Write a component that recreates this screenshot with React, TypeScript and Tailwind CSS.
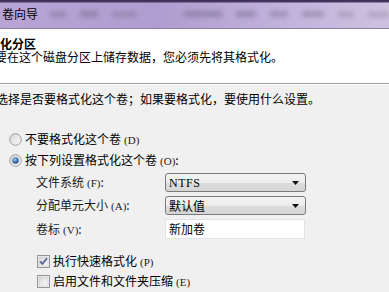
import React from 'react'

const font = { fontFamily: '"Noto Sans CJK SC", "Noto Sans", sans-serif' }

function Radio({ checked }: { checked?: boolean }) {
  return (
    <svg width="13" height="13" viewBox="0 0 13 13" className="shrink-0">
      <defs>
        <linearGradient id={checked ? 'rbg1' : 'rbg0'} x1="0" y1="0" x2="1" y2="1">
          <stop offset="0" stopColor="#d4d4d4" />
          <stop offset="1" stopColor="#fbfbfb" />
        </linearGradient>
        <radialGradient id="rdot" cx="0.4" cy="0.35" r="0.7">
          <stop offset="0" stopColor="#a9c8ea" />
          <stop offset="0.6" stopColor="#3c70ad" />
          <stop offset="1" stopColor="#1d4276" />
        </radialGradient>
      </defs>
      <circle cx="6.5" cy="6.5" r="5.8" fill={`url(#${checked ? 'rbg1' : 'rbg0'})`} stroke="#9a9c9e" strokeWidth="1" />
      {checked && <circle cx="6.5" cy="6.5" r="3.2" fill="url(#rdot)" />}
    </svg>
  )
}

function Check({ checked }: { checked?: boolean }) {
  return (
    <svg width="13" height="13" viewBox="0 0 13 13" className="shrink-0">
      <defs>
        <linearGradient id="cbg" x1="0" y1="0" x2="1" y2="1">
          <stop offset="0" stopColor="#d6d6d6" />
          <stop offset="1" stopColor="#fafafa" />
        </linearGradient>
      </defs>
      <rect x="0.5" y="0.5" width="12" height="12" fill="#f4f4f4" stroke="#959595" />
      <rect x="2" y="2" width="9" height="9" fill="url(#cbg)" stroke="#c6c6c6" strokeWidth="0.6" />
      {checked && (
        <path d="M3.2 6.4 L5.4 9 L9.9 3.2" fill="none" stroke="#52668f" strokeWidth="1.8" strokeLinejoin="round" />
      )}
    </svg>
  )
}

function Combo({ value, mono }: { value: string; mono?: boolean }) {
  return (
    <div className="w-[141px] h-[19px] flex items-center justify-between rounded-[3px] border border-[#7a7a7a] bg-[linear-gradient(180deg,#f4f4f4_0%,#ececec_50%,#dcdcdc_51%,#d6d6d6_100%)] pl-[3px] pr-[6px]">
      <span
        className={mono ? 'text-[12px] leading-none text-black tracking-[0.5px]' : 'text-[12px] leading-none text-black'}
        style={mono ? { fontFamily: '"Liberation Serif", serif' } : font}
      >
        {value}
      </span>
      <svg width="7" height="4" viewBox="0 0 7 4">
        <polygon points="0,0 7,0 3.5,4" fill="#111" />
      </svg>
    </div>
  )
}

function Key({ k }: { k: string }) {
  return (
    <span className="ml-[3px] text-[11px] text-[#222]" style={{ fontFamily: '"Liberation Serif", serif' }}>
      ({k})
    </span>
  )
}

export default function App() {
  return (
    <div className="w-[389px] h-[292px] overflow-hidden bg-[#f0f0f0] text-[12px] text-black" style={font}>
      {/* title bar */}
      <div className="h-[29px] flex items-center gap-[12px] border-b border-[#8f82a8] bg-[linear-gradient(180deg,#3a2c52_0px,#4a3a66_2px,rgba(255,255,255,0)_3px),linear-gradient(90deg,#b8a5d6_0%,#b09ccf_40%,#c2b4dc_75%,#cdc2e0_100%)] pl-[2px] overflow-hidden">
        <span className="shrink-0 whitespace-nowrap text-[12px] text-black">卷向导</span>
        <div className="flex flex-1 min-w-0 items-center gap-[14px] overflow-hidden opacity-50 blur-[2.5px]">
          <span className="shrink-0 w-[16px] h-[5px] bg-[#706684]" />
          <span className="shrink-0 w-[18px] h-[6px] bg-[#706684]" />
          <span className="shrink-0 w-[24px] h-[5px] bg-[#7c718e]" />
          <span className="shrink-0 w-[20px] h-[4px] bg-transparent" />
          <span className="shrink-0 w-[38px] h-[6px] bg-[#706684]" />
          <span className="shrink-0 w-[20px] h-[6px] bg-[#706684]" />
          <span className="shrink-0 w-[18px] h-[6px] bg-[#7c718e]" />
          <span className="shrink-0 w-[22px] h-[6px] bg-[#7c718e]" />
          <span className="shrink-0 w-[16px] h-[5px] bg-[#8c819c]" />
          <span className="shrink-0 w-[24px] h-[5px] bg-[#8c819c]" />
        </div>
      </div>

      {/* header */}
      <div className="h-[55px] bg-white pt-[8px] border-b border-[#a0a0a0]">
        <div className="leading-[14px] font-bold">化分区</div>
        <div className="leading-[12px] ml-[-5px] whitespace-nowrap">要在这个磁盘分区上储存数据，您必须先将其格式化。</div>
      </div>
      <div className="h-px bg-white" />

      {/* body */}
      <div className="pt-[7px]">
        <div className="leading-[14px] ml-[-4px] whitespace-nowrap">选择是否要格式化这个卷；如果要格式化，要使用什么设置。</div>

        <div className="mt-[23px] h-[21px] flex items-center pl-[9px] gap-[3px]">
          <Radio />
          <span>
            不要格式化这个卷<Key k="D" />
          </span>
        </div>
        <div className="h-[21px] flex items-center pl-[9px] gap-[3px]">
          <Radio checked />
          <span>
            按下列设置格式化这个卷<Key k="O" />:
          </span>
        </div>

        <div className="pl-[36px]">
          <div className="h-[23px] flex items-center">
            <span className="w-[129px] text-[#1a1a1a]">
              文件系统<Key k="F" />:
            </span>
            <Combo value="NTFS" mono />
          </div>
          <div className="h-[23px] flex items-center">
            <span className="w-[129px] text-[#1a1a1a]">
              分配单元大小<Key k="A" />:
            </span>
            <Combo value="默认值" />
          </div>
          <div className="h-[24px] flex items-center">
            <span className="w-[129px] text-[#1a1a1a]">
              卷标<Key k="V" />:
            </span>
            <div className="w-[140px] h-[20px] flex items-center bg-white border border-[#e2e3ea] pl-[3px]">
              新加卷
            </div>
          </div>

          <div className="mt-[10px] h-[20px] flex items-center gap-[3px] pl-[1px]">
            <Check checked />
            <span>
              执行快速格式化<Key k="P" />
            </span>
          </div>
          <div className="h-[20px] flex items-center gap-[3px] pl-[1px]">
            <Check />
            <span>
              启用文件和文件夹压缩<Key k="E" />
            </span>
          </div>
        </div>
      </div>
    </div>
  )
}
